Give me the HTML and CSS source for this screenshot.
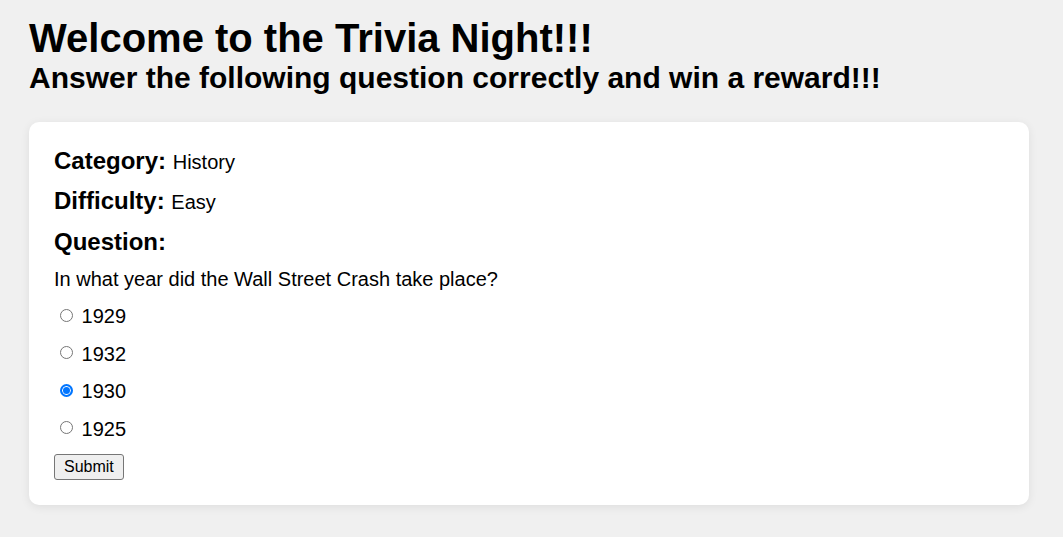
FILE: index.html
```html
<!DOCTYPE html>
<html lang="en">
<head>
<meta charset="utf-8">
<title>Trivia Night</title>
<link rel="stylesheet" href="styles.css">
</head>
<body>
<div class="page">
  <h1 class="title">Welcome to the Trivia Night!!!</h1>
  <h2 class="subtitle">Answer the following question correctly and win a reward!!!</h2>
  <form class="card">
    <div class="meta"><span class="label">Category:</span> <span class="value">History</span></div>
    <div class="meta"><span class="label">Difficulty:</span> <span class="value">Easy</span></div>
    <div class="meta"><span class="label">Question:</span></div>
    <p class="question">In what year did the Wall Street Crash take place?</p>
    <div class="options">
      <label class="option"><input type="radio" class="radio" name="answer" value="1929"> 1929</label>
      <label class="option"><input type="radio" class="radio" name="answer" value="1932"> 1932</label>
      <label class="option"><input type="radio" class="radio" name="answer" value="1930" checked> 1930</label>
      <label class="option"><input type="radio" class="radio" name="answer" value="1925"> 1925</label>
    </div>
    <button type="button" class="submit">Submit</button>
  </form>
</div>
</body>
</html>
```

FILE: styles.css
```css
html, body {
  margin: 0;
  padding: 0;
}

body {
  background: #f0f0f0;
  color: #000;
  font-family: "Liberation Sans", Arial, sans-serif;
  font-size: 20px;
}

.page {
  padding: 15px 29px;
  max-width: 1000px;
}

.title {
  margin: 0;
  font-size: 40px;
  font-weight: bold;
  line-height: 46px;
}

.subtitle {
  margin: 0;
  font-size: 30px;
  font-weight: bold;
  line-height: 34.5px;
}

.card {
  margin-top: 26.5px;
  background: #fff;
  border-radius: 10px;
  box-shadow: 0 2px 10px rgba(0, 0, 0, 0.08);
  padding: 25px;
  display: flex;
  flex-direction: column;
  align-items: flex-start;
  gap: 12.8px;
}

.meta {
  font-size: 24px;
  line-height: 27.6px;
  height: 27.6px;
}

.label {
  font-weight: bold;
}

.value {
  font-size: 20px;
  line-height: 1;
}

.question {
  margin: 0;
  line-height: 23px;
  height: 23px;
}

.options {
  margin-top: 1.5px;
  display: flex;
  flex-direction: column;
  gap: 14.4px;
}

.option {
  display: block;
  line-height: 23px;
  height: 23px;
}

.radio {
  -webkit-appearance: none;
  appearance: none;
  box-sizing: border-box;
  display: inline-block;
  width: 13px;
  height: 13px;
  margin: 3px 3px 0 6px;
  border: 1px solid #767676;
  border-radius: 50%;
  background: #fff;
  vertical-align: 1.5px;
}

.radio:checked {
  border: 2px solid #0075ff;
  background: #0075ff;
  box-shadow: inset 0 0 0 1px #fff;
}

.submit {
  margin-top: 1px;
  font-family: "Liberation Sans", Arial, sans-serif;
  font-size: 16px;
  color: #000;
  padding: 3px 9px;
  border: 1px solid #767676;
  border-radius: 3px;
  background: #efefef;
  line-height: normal;
}
```
